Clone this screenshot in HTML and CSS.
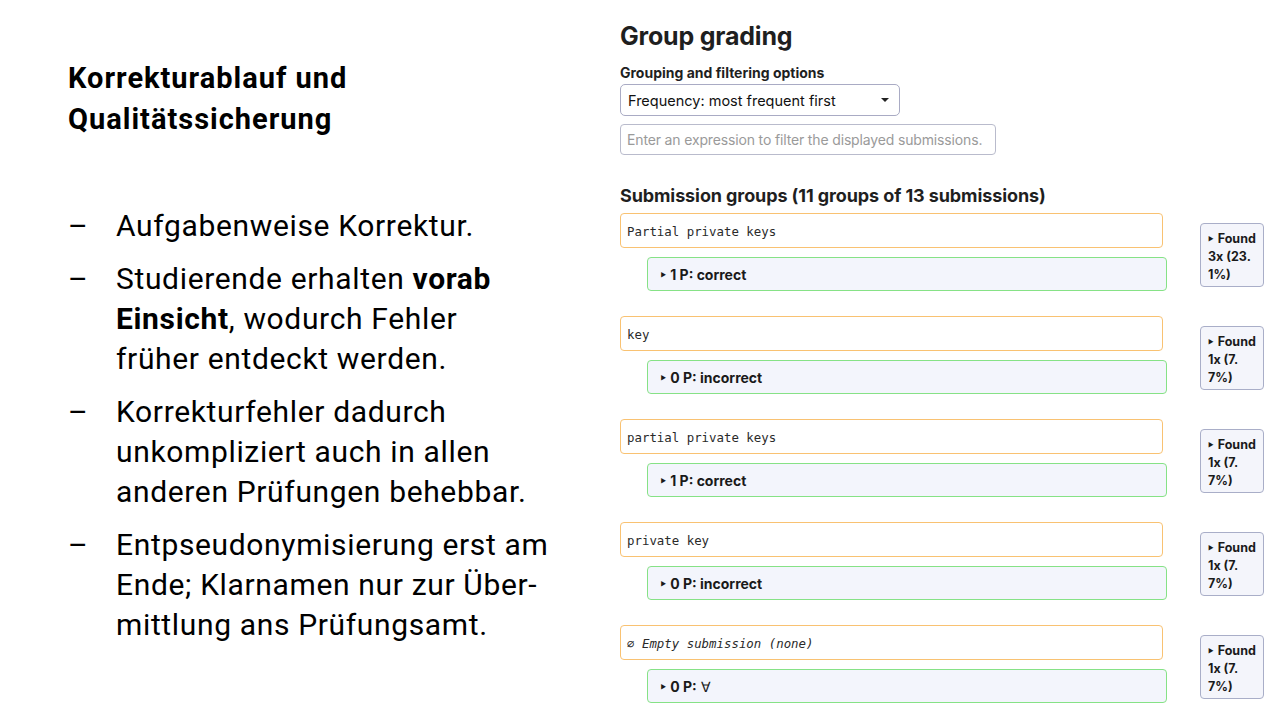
FILE: index.html
```html
<!DOCTYPE html>
<html lang="de">
<head>
<meta charset="utf-8">
<link rel="stylesheet" href="styles.css">
</head>
<body>
<div class="page">
  <section class="slide">
    <h1 class="title">Korrekturablauf und<br>Qualitätssicherung</h1>
    <ul class="points">
      <li><span class="dash">–</span><span class="txt">Aufgabenweise Korrektur.</span></li>
      <li><span class="dash">–</span><span class="txt">Studierende erhalten <b>vorab</b><br><b>Einsicht</b>, wodurch Fehler<br>früher entdeckt werden.</span></li>
      <li><span class="dash">–</span><span class="txt">Korrekturfehler dadurch<br>unkompliziert auch in allen<br>anderen Prüfungen behebbar.</span></li>
      <li><span class="dash">–</span><span class="txt">Entpseudonymisierung erst am<br>Ende; Klarnamen nur zur Über-<br>mittlung ans Prüfungsamt.</span></li>
    </ul>
  </section>
  <section class="app">
    <h2 class="app-title">Group grading</h2>
    <h3 class="opt-title">Grouping and filtering options</h3>
    <div class="select"><span>Frequency: most frequent first</span><span class="caret"></span></div>
    <div class="filter">Enter an expression to filter the displayed submissions.</div>
    <h3 class="groups-title">Submission groups (11 groups of 13 submissions)</h3>
    <div class="groups">
      <div class="group">
        <div class="gmain">
          <div class="answer">Partial private keys</div>
          <div class="grade"><span class="tri">▶</span>1 P: correct</div>
        </div>
        <div class="found"><span class="tri">▶</span>Found<br>3x (23.<br>1%)</div>
      </div>
      <div class="group">
        <div class="gmain">
          <div class="answer">key</div>
          <div class="grade"><span class="tri">▶</span>0 P: incorrect</div>
        </div>
        <div class="found"><span class="tri">▶</span>Found<br>1x (7.<br>7%)</div>
      </div>
      <div class="group">
        <div class="gmain">
          <div class="answer">partial private keys</div>
          <div class="grade"><span class="tri">▶</span>1 P: correct</div>
        </div>
        <div class="found"><span class="tri">▶</span>Found<br>1x (7.<br>7%)</div>
      </div>
      <div class="group">
        <div class="gmain">
          <div class="answer">private key</div>
          <div class="grade"><span class="tri">▶</span>0 P: incorrect</div>
        </div>
        <div class="found"><span class="tri">▶</span>Found<br>1x (7.<br>7%)</div>
      </div>
      <div class="group">
        <div class="gmain">
          <div class="answer empty">∅ Empty submission (none)</div>
          <div class="grade"><span class="tri">▶</span>0 P: <span class="forall">∀</span></div>
        </div>
        <div class="found"><span class="tri">▶</span>Found<br>1x (7.<br>7%)</div>
      </div>
    </div>
  </section>
</div>
</body>
</html>
```

FILE: styles.css
```css
html, body {
  margin: 0;
  padding: 0;
  background: #ffffff;
  width: 1280px;
  height: 720px;
  overflow: hidden;
}

.page {
  display: grid;
  grid-template-columns: 620px 660px;
  height: 720px;
}

.slide {
  padding: 58px 0 0 68px;
  font-family: "Roboto", "DejaVu Sans", sans-serif;
  color: #000;
}

.title {
  margin: 0;
  font-size: 29px;
  line-height: 41px;
  font-weight: 700;
  letter-spacing: 1px;
}

.points {
  list-style: none;
  margin: 0;
  padding: 0;
  margin-top: 66px;
  font-size: 30px;
  line-height: 40px;
  letter-spacing: 0.65px;
}

.points li {
  display: flex;
  margin-bottom: 13px;
}

.dash {
  width: 48px;
  flex: none;
  letter-spacing: 0;
}

.points b {
  font-weight: 700;
}

.app {
  font-family: "Inter", "Liberation Sans", sans-serif;
  color: #1f1f1f;
  padding-top: 19px;
}

.app-title {
  margin: 0;
  font-size: 25px;
  line-height: 34px;
  font-weight: 700;
  letter-spacing: -0.2px;
}

.opt-title {
  margin: 11px 0 0;
  font-size: 14px;
  line-height: 18px;
  font-weight: 700;
}

.select {
  margin-top: 2px;
  width: 280px;
  height: 32px;
  box-sizing: border-box;
  border: 1px solid #a9abc4;
  border-radius: 5px;
  display: flex;
  align-items: center;
  justify-content: space-between;
  padding: 0 10px 0 7px;
  font-size: 14.5px;
  color: #111;
}

.caret {
  width: 0;
  height: 0;
  border-left: 4px solid transparent;
  border-right: 4px solid transparent;
  border-top: 4px solid #222;
}

.filter {
  margin-top: 8px;
  width: 376px;
  height: 31px;
  box-sizing: border-box;
  border: 1px solid #b9bbcc;
  border-radius: 4px;
  display: flex;
  align-items: center;
  padding: 0 6px;
  font-size: 14px;
  letter-spacing: -0.15px;
  white-space: nowrap;
  overflow: hidden;
  color: #9a9a9a;
}

.groups-title {
  margin: 30px 0 0;
  font-size: 18px;
  line-height: 22px;
  font-weight: 700;
  letter-spacing: -0.1px;
}

.groups {
  margin-top: 6px;
  display: flex;
  flex-direction: column;
  gap: 25px;
}

.group {
  display: flex;
  align-items: center;
}

.gmain {
  width: 547px;
  display: flex;
  flex-direction: column;
  gap: 9px;
}

.answer {
  width: 543px;
  height: 35px;
  box-sizing: border-box;
  border: 1.5px solid #f9c272;
  border-radius: 4px;
  background: #ffffff;
  display: flex;
  align-items: center;
  padding: 1px 6px 0;
  font-family: "DejaVu Sans Mono", "Liberation Mono", monospace;
  font-size: 12.4px;
  color: #2a2a2a;
}

.answer.empty {
  font-style: italic;
}

.grade {
  margin-left: 27px;
  width: 520px;
  height: 34px;
  box-sizing: border-box;
  border: 1.5px solid #86e286;
  border-radius: 4px;
  background: #f3f5fc;
  display: flex;
  align-items: center;
  padding: 0 12.5px;
  font-size: 14px;
  font-weight: 700;
  color: #1a1a1a;
}

.tri {
  font-size: 6px;
  margin-right: 4px;
  display: inline-block;
  vertical-align: 2px;
}

.grade .tri {
  vertical-align: 0;
}

.forall {
  font-weight: 400;
  margin-left: 4px;
}

.found {
  margin-left: 33px;
  margin-top: 6px;
  width: 64px;
  height: 64px;
  box-sizing: border-box;
  border: 1px solid #a9aec8;
  border-radius: 4px;
  background: #f4f5fb;
  padding: 6px 0 0 7px;
  font-size: 12.5px;
  line-height: 18px;
  font-weight: 700;
  color: #1a1a1a;
}
```
